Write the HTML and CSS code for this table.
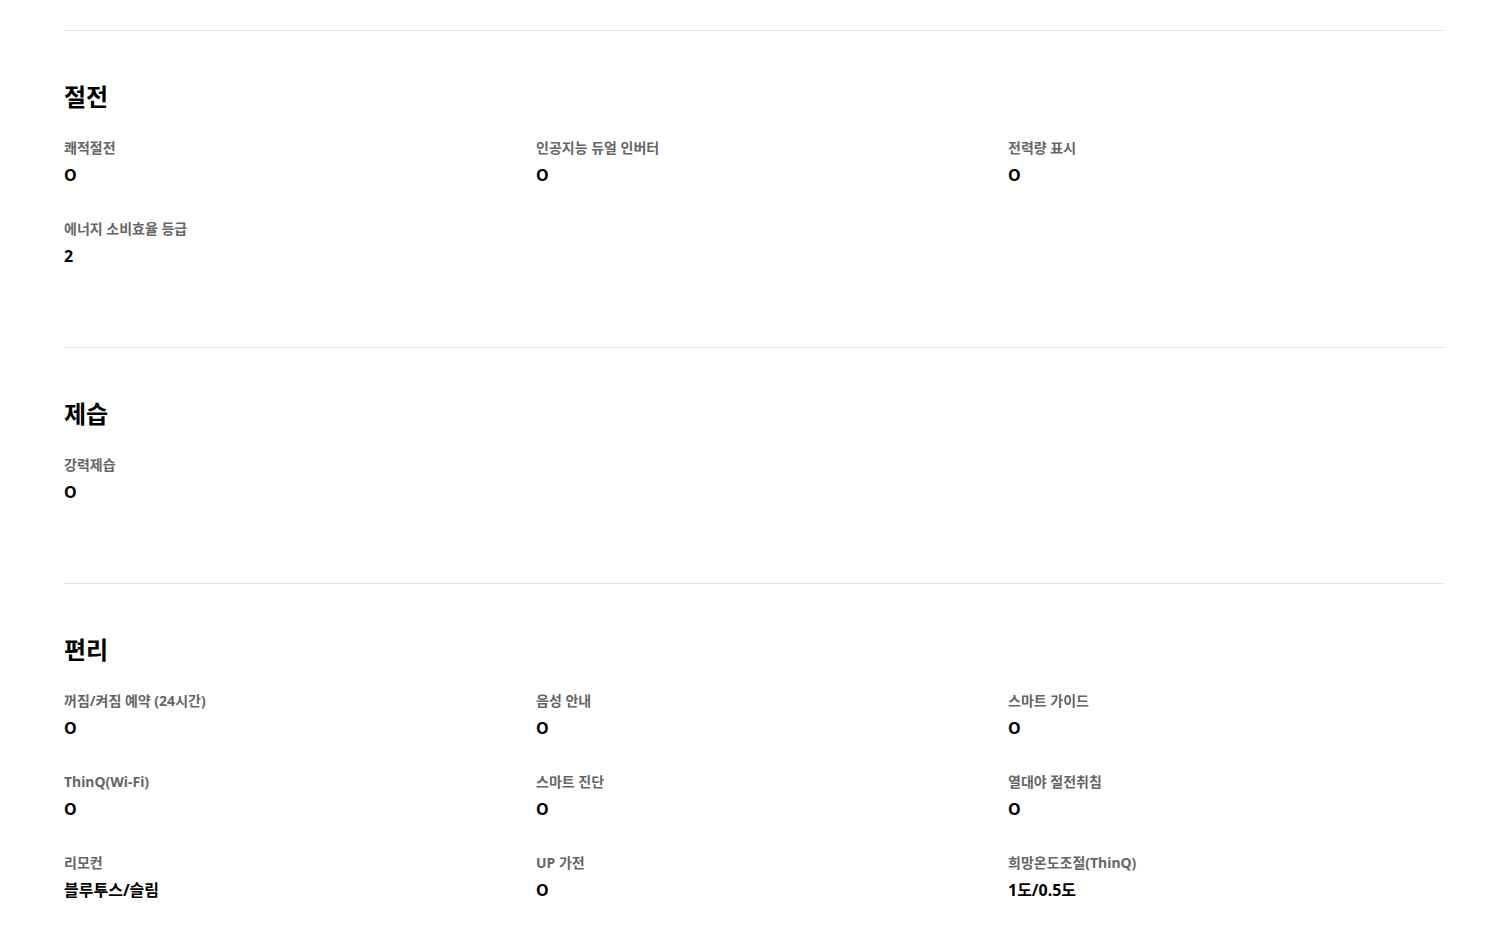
FILE: index.html
```html
<!DOCTYPE html>
<html lang="ko">
<head>
    <meta charset="UTF-8">
    <meta name="viewport" content="width=device-width, initial-scale=1.0">
    <title>제품 사양</title>
    <link rel="stylesheet" href="styles.css">
</head>
<body>

    <div class="spec">
        <!-- 절전 -->
        <section class="spec-group">
            <h2>절전</h2>
            <dl class="spec-list">
                <div class="spec-item"><dt>쾌적절전</dt><dd>O</dd></div>
                <div class="spec-item"><dt>인공지능 듀얼 인버터</dt><dd>O</dd></div>
                <div class="spec-item"><dt>전력량 표시</dt><dd>O</dd></div>
                <div class="spec-item"><dt>에너지 소비효율 등급</dt><dd>2</dd></div>
            </dl>
        </section>

        <!-- 제습 -->
        <section class="spec-group">
            <h2>제습</h2>
            <dl class="spec-list">
                <div class="spec-item"><dt>강력제습</dt><dd>O</dd></div>
            </dl>
        </section>

        <!-- 편리 -->
        <section class="spec-group">
            <h2>편리</h2>
            <dl class="spec-list">
                <div class="spec-item"><dt>꺼짐/켜짐 예약 (24시간)</dt><dd>O</dd></div>
                <div class="spec-item"><dt>음성 안내</dt><dd>O</dd></div>
                <div class="spec-item"><dt>스마트 가이드</dt><dd>O</dd></div>
                <div class="spec-item"><dt>ThinQ(Wi-Fi)</dt><dd>O</dd></div>
                <div class="spec-item"><dt>스마트 진단</dt><dd>O</dd></div>
                <div class="spec-item"><dt>열대야 절전취침</dt><dd>O</dd></div>
                <div class="spec-item"><dt>리모컨</dt><dd>블루투스/슬림</dd></div>
                <div class="spec-item"><dt>UP 가전</dt><dd>O</dd></div>
                <div class="spec-item"><dt>희망온도조절(ThinQ)</dt><dd>1도/0.5도</dd></div>
            </dl>
        </section>
    </div>

</body>
</html>
```

FILE: styles.css
```css
body {
    font-family: "Noto Sans", "Noto Sans CJK KR", sans-serif;
    background-color: #ffffff;
    color: #000;
    margin: 0;
    padding: 0;
}

.spec {
    margin: 0 59px 0 64px;
    padding-top: 30px;
}

.spec-group {
    border-top: 1px solid #e4e4e4;
    padding: 49px 0 79px;
}

.spec-group h2 {
    font-size: 24px;
    font-weight: 700;
    line-height: 34px;
    margin: 0 0 24px;
}

.spec-list {
    display: grid;
    grid-template-columns: repeat(3, 1fr);
    column-gap: 36px;
    row-gap: 32px;
    margin: 0;
}

.spec-item dt {
    font-size: 14px;
    font-weight: 700;
    line-height: 20px;
    color: #666;
}

.spec-item dd {
    font-size: 16px;
    font-weight: 700;
    line-height: 24px;
    margin: 5px 0 0;
}
```
